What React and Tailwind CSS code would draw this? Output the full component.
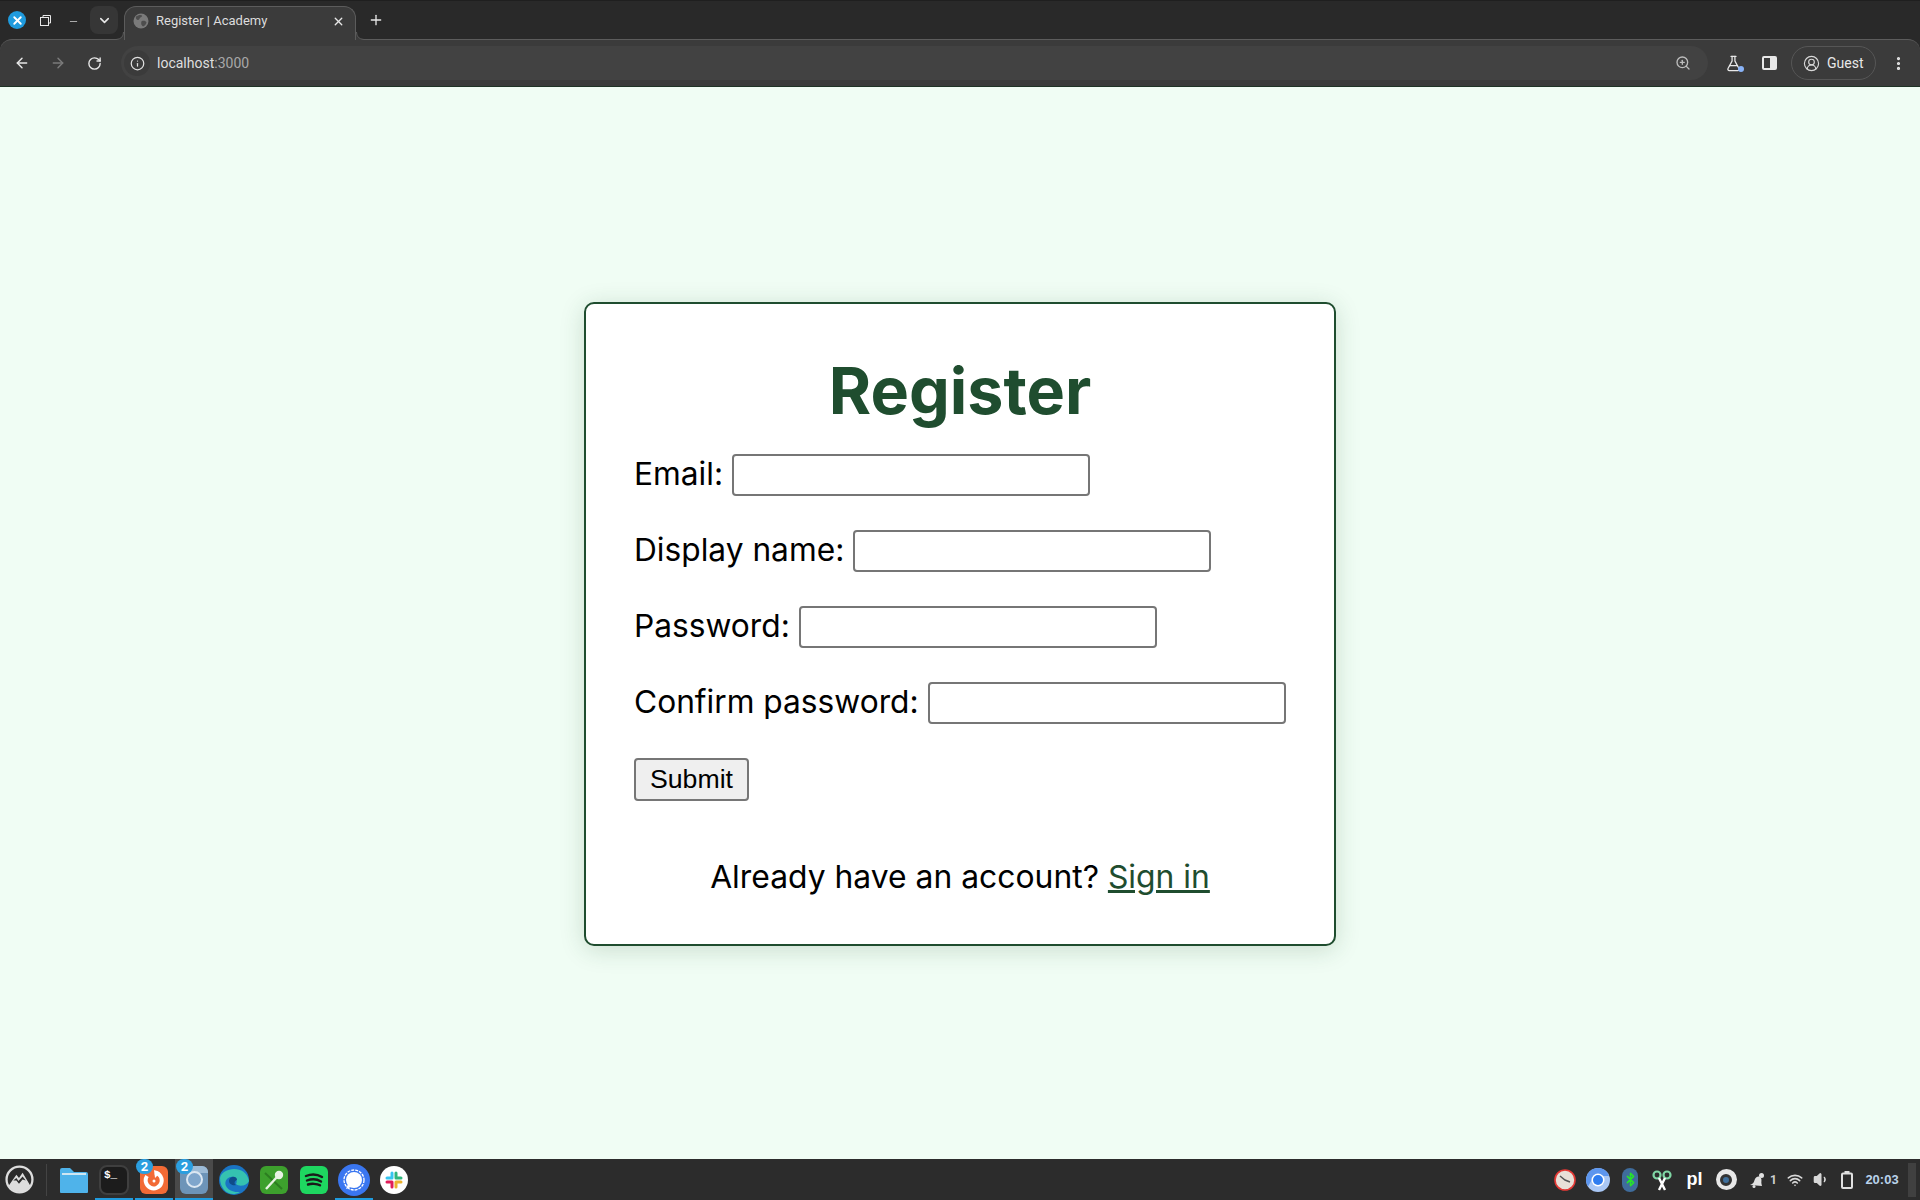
import React from "react";
import {
  ArrowLeft,
  ArrowRight,
  RotateCw,
  Info,
  ZoomIn,
  FlaskConical,
  CircleUserRound,
  EllipsisVertical,
  Plus,
  X,
  ChevronDown,
  Minus,
  Wifi,
  Volume1,
  Bluetooth,
} from "lucide-react";

function TabStrip() {
  return (
    <div className="flex h-[39px] items-start border-t border-[#1f1f1f]">
      <div className="flex h-[38px] w-[34px] items-center justify-center">
        <div className="flex h-[18px] w-[18px] items-center justify-center rounded-full bg-[#1f9bde]">
          <X size={13} strokeWidth={3.5} className="text-white" />
        </div>
      </div>
      <div className="flex h-[38px] w-[22px] items-center justify-center">
        <svg width="11" height="11" viewBox="0 0 11 11" fill="none" stroke="#e8e8e8" strokeWidth="1">
          <rect x="0.5" y="2.5" width="8" height="8" />
          <path d="M3 2.5V0.5H10.5V8H8.5" />
        </svg>
      </div>
      <div className="flex h-[38px] w-[34px] items-end justify-center pb-[12px]">
        <Minus size={11} strokeWidth={1.5} className="text-[#e8e8e8]" />
      </div>
      <div className="mt-[5px] flex h-[28px] w-[28px] items-center justify-center rounded-lg bg-[#363636]">
        <ChevronDown size={15} strokeWidth={2.5} className="text-[#e8e8e8]" />
      </div>
      <div className="relative ml-[6px] mt-[5px] flex h-[34px] w-[232px] items-center rounded-t-xl border border-b-0 border-[#5c5c5c] bg-[#3b3b3b] pb-[5px] pl-[8px] pr-[10px]">
        <svg width="16" height="16" viewBox="0 0 16 16">
          <circle cx="8" cy="8" r="7.5" fill="#7a7a7a" />
          <path d="M3 3.5c2-1.5 5-2 6-1 .5 1-1 1.500-2 2.500-1 .8-.5 2-2 2-1.500 0-2.500-1.500-2-3.500zM9 8c2-.5 4 0 4.500 1.500-.5 2-2 3.500-3.500 4-1-1-2-2-1.800-3.300 0-1 .2-1.900.8-2.200z" fill="#4d4d4d" />
        </svg>
        <span className="ml-[7px] flex-1 font-['Roboto',sans-serif] text-[13px] text-[#dddddd]">Register | Academy</span>
        <X size={13} strokeWidth={2.5} className="text-[#e8e8e8]" />
        <svg className="absolute bottom-0 left-[-9px]" width="8" height="8" viewBox="0 0 8 8">
          <path d="M8 0Q8 7 0 7.500V8H8Z" fill="#3b3b3b" />
          <path d="M7.500 0Q7.500 7 0 7.500" fill="none" stroke="#5c5c5c" />
        </svg>
        <svg className="absolute bottom-0 right-[-9px]" width="8" height="8" viewBox="0 0 8 8">
          <path d="M0 0Q0 7 8 7.500V8H0Z" fill="#3b3b3b" />
          <path d="M0.500 0Q0.500 7 8 7.500" fill="none" stroke="#5c5c5c" />
        </svg>
      </div>
      <div className="ml-[8px] mt-[5px] flex h-[28px] w-[24px] items-center justify-center">
        <Plus size={16} strokeWidth={2} className="text-[#e8e8e8]" />
      </div>
    </div>
  );
}

function Toolbar() {
  return (
    <div className="flex h-[48px] items-center rounded-t-xl border-t border-b border-t-[#5c5c5c] border-b-[#1f3326] bg-[#3b3b3b]">
      <div className="flex w-[116px] shrink-0 items-center">
        <div className="flex w-[40px] justify-center pl-[4px]">
          <ArrowLeft size={16} strokeWidth={2.2} className="text-[#e8e8e8]" />
        </div>
        <div className="flex w-[36px] justify-center">
          <ArrowRight size={16} strokeWidth={2.2} className="text-[#7b7b7b]" />
        </div>
        <div className="flex w-[36px] justify-center">
          <RotateCw size={15} strokeWidth={2.2} className="text-[#e8e8e8]" />
        </div>
      </div>
      <div className="ml-[5px] flex h-[34px] w-[1587px] shrink-0 items-center rounded-full bg-[#424242] pl-[3px] pr-[17px]">
        <div className="flex h-[26px] w-[26px] items-center justify-center rounded-full bg-[#3b3b3b]">
          <Info size={15} strokeWidth={2} className="text-[#e0e0e0]" />
        </div>
        <span className="ml-[7px] flex-1 font-['Roboto',sans-serif] text-[14px] text-[#dfdfdf]">
          localhost<span className="text-[#a8a8a8]">:3000</span>
        </span>
        <ZoomIn size={16} strokeWidth={2} className="text-[#bdbdbd]" />
      </div>
      <div className="ml-[7px] flex w-[36px] justify-center">
        <div className="relative">
          <FlaskConical size={17} strokeWidth={1.8} className="text-[#e8e8e8]" />
          <span className="absolute bottom-0 right-[-2px] h-[6px] w-[6px] rounded-full bg-[#8ab4f8]" />
        </div>
      </div>
      <div className="flex w-[36px] justify-center">
        <div className="flex h-[14px] w-[15px] overflow-hidden rounded-[2px] border-2 border-[#e8e8e8]">
          <div className="w-[6px]" />
          <div className="flex-1 bg-[#e8e8e8]" />
        </div>
      </div>
      <div className="ml-[4px] flex h-[34px] w-[85px] items-center gap-[7px] rounded-full border border-[#565656] pl-[11px]">
        <CircleUserRound size={17} strokeWidth={1.6} className="text-[#d8d8d8]" />
        <span className="font-['Roboto',sans-serif] text-[14px] text-[#e8e8e8]">Guest</span>
      </div>
      <div className="ml-[13px] flex w-[18px] justify-center">
        <EllipsisVertical size={17} strokeWidth={2.5} className="text-[#e8e8e8]" />
      </div>
    </div>
  );
}

function FormRow({ label, last }) {
  return (
    <div className={`h-[42px] whitespace-nowrap leading-[42px] ${last ? "mb-[35px]" : "mb-[34px]"}`}>
      <label className="text-[31.7px] text-black">
        {label}{" "}
        <input
          type="text"
          className="h-[42px] w-[358px] rounded-[4px] border-2 border-[#767676] bg-white px-1 align-[1px] font-['Liberation_Sans',sans-serif] text-[26.67px]"
        />
      </label>
    </div>
  );
}

function RegisterCard() {
  return (
    <div className="w-[752px] rounded-[10px] border-2 border-[#1f4d2f] bg-white p-12 font-['Inter',sans-serif] shadow-[0_4px_24px_rgba(31,77,47,0.18)]">
      <h1 className="mb-[24px] text-center text-[64.6px] font-bold leading-[77px] text-[#1f4d2f]">Register</h1>
      <form>
        <FormRow label="Email:" />
        <FormRow label="Display name:" />
        <FormRow label="Password:" />
        <FormRow label="Confirm password:" last />
        <button
          type="button"
          className="h-[43px] w-[115px] rounded-[4px] border-2 border-[#767676] bg-[#efefef] pb-[2px] font-['Liberation_Sans',sans-serif] text-[26.67px] leading-[36px] text-black"
        >
          Submit
        </button>
      </form>
      <p className="mt-[56px] text-center text-[31.85px] leading-[39px] text-black">
        Already have an account?{" "}
        <a href="#signin" className="text-[#1f4d2f] underline">
          Sign in
        </a>
      </p>
    </div>
  );
}

function Badge({ n }) {
  return (
    <span className="absolute left-[1px] top-0 flex h-[15px] w-[17px] items-center justify-center rounded-full bg-[#2b9fe0] font-['Roboto',sans-serif] text-[13px] font-bold text-white">
      {n}
    </span>
  );
}

function DockSlot({ children, running, active }) {
  return (
    <div className={`relative flex h-full w-[38px] items-center justify-center ${active ? "bg-[#4a4a4a]" : ""}`}>
      {children}
      {running && <span className="absolute bottom-0 left-0 right-0 h-[2px] bg-[#1f9bde]" />}
    </div>
  );
}

function Taskbar() {
  return (
    <div className="flex h-[41px] items-center justify-between bg-[#2c2c2c]">
      <div className="flex h-full items-center">
        <div className="flex w-[46px] items-center justify-center pr-[8px]">
          <svg width="29" height="29" viewBox="0 0 28 28">
            <circle cx="14" cy="14" r="12.500" fill="#2c2c2c" stroke="#dddddd" strokeWidth="2.200" />
            <path d="M3.500 20L11 9.500L13.500 12.500L17 7.500L24.500 20C21 25 18 26 14 26C10 26 6 24 3.500 20Z" fill="#dddddd" />
            <path d="M8 15L11 12.500L13 15.500L17 11L20 15L17 14L13.500 18L11 15Z" fill="#2c2c2c" />
          </svg>
        </div>
        <div className="h-[32px] w-px bg-[#444444]" />
        <div className="ml-[8px] flex h-full items-center gap-[2px]">
          <DockSlot>
            <svg width="30" height="28" viewBox="0 0 30 28">
              <path d="M1 4a2 2 0 0 1 2-2h8l4 4h12a2 2 0 0 1 2 2v18a1 1 0 0 1-1 1H2a1 1 0 0 1-1-1z" fill="#4fb3ea" />
              <rect x="3" y="7" width="24" height="2" fill="#cfe6f2" />
            </svg>
          </DockSlot>
          <DockSlot running>
            <div className="h-[30px] w-[30px] rounded-lg border-2 border-[#3f3f3f] bg-[#1c1c1c] pl-[3px] font-['Liberation_Mono',monospace] text-[11px] font-bold leading-[16px] text-white">
              $_
            </div>
          </DockSlot>
          <DockSlot running>
            <div className="flex h-[28px] w-[28px] items-center justify-center rounded-md bg-[#f26a35]">
              <svg width="22" height="22" viewBox="0 0 22 22" fill="none">
                <path d="M12 3.500A8 8 0 1 1 4 7" stroke="#ffffff" strokeWidth="4" />
                <path d="M11 1l6 3-5 5z" fill="#ffffff" />
                <circle cx="11" cy="12" r="1.500" fill="#ffffff" />
              </svg>
            </div>
            <Badge n="2" />
          </DockSlot>
          <DockSlot running active>
            <div className="relative flex h-[28px] w-[28px] items-center justify-center overflow-hidden rounded-md bg-[#6d94b8]">
              <div className="absolute right-0 top-0 h-[7px] w-[20px] bg-[#9dbbd6]" />
              <div className="relative h-[17px] w-[17px] rounded-full border-2 border-[#dbe7f2] bg-[#7fa6cc]" />
            </div>
            <Badge n="2" />
          </DockSlot>
          <DockSlot>
            <svg width="32" height="32" viewBox="0 0 32 32">
              <circle cx="16" cy="16" r="15" fill="#1a74c4" />
              <path d="M2 14C4 3 28 0 31 17c-2 5-10 6-13 3 3-6-4-10-9-5-5 6 2 14 13 13 -10 6-20-2-20-14z" fill="#35c2b0" />
              <path d="M11 17c0-5 8-6 8-1-3 1-3 4-1 5-3 1-7-1-7-4z" fill="#0f4c8a" />
            </svg>
          </DockSlot>
          <DockSlot>
            <div className="flex h-[28px] w-[28px] items-center justify-center rounded-md bg-[#3da02d]">
              <svg width="24" height="24" viewBox="0 0 24 24" fill="none" stroke="#e8f3e3" strokeWidth="2.400">
                <path d="M3 5l17 16" stroke="#2c7d20" strokeWidth="2" />
                <circle cx="17" cy="7" r="3" fill="#e8f3e3" />
                <path d="M15 9L4 21" />
              </svg>
            </div>
          </DockSlot>
          <DockSlot>
            <div className="flex h-[28px] w-[28px] items-center justify-center rounded-md bg-[#1ed760]">
              <svg width="20" height="16" viewBox="0 0 20 16" fill="none" stroke="#1a1a1a" strokeWidth="2.400" strokeLinecap="round">
                <path d="M2 4c5-2 11-2 16 1" />
                <path d="M3 8.500c4-1.500 10-1.500 14 1" />
                <path d="M4 12.500c3-1 9-1 12 .8" />
              </svg>
            </div>
          </DockSlot>
          <DockSlot running>
            <div className="flex h-[32px] w-[32px] items-center justify-center rounded-full bg-[#3a76f0]">
              <svg width="26" height="26" viewBox="0 0 26 26">
                <circle cx="13" cy="13" r="10" fill="none" stroke="#ffffff" strokeWidth="1.300" strokeDasharray="3 1" />
                <circle cx="13" cy="13" r="8" fill="#ffffff" />
                <path d="M7 17l-2 5 5-2z" fill="#ffffff" />
              </svg>
            </div>
          </DockSlot>
          <DockSlot>
            <div className="flex h-[28px] w-[28px] items-center justify-center rounded-full bg-white">
              <svg width="18" height="18" viewBox="0 0 18 18" strokeWidth="3" strokeLinecap="round" fill="none">
                <path d="M7 2v5M2 7h5" stroke="#36c5f0" />
                <path d="M16 7h-5M11 2v5" stroke="#2eb67d" />
                <path d="M11 16v-5M16 11h-5" stroke="#ecb22e" />
                <path d="M2 11h5M7 16v-5" stroke="#e01e5a" />
              </svg>
            </div>
          </DockSlot>
        </div>
      </div>

      <div className="flex h-full items-center">
        <div className="flex w-[34px] justify-center">
          <svg width="22" height="22" viewBox="0 0 22 22">
            <circle cx="11" cy="11" r="10" fill="#e8e0d8" stroke="#e53935" strokeWidth="1.600" />
            <path d="M6 7l5 4 5 2" fill="none" stroke="#555555" strokeWidth="1.500" />
          </svg>
        </div>
        <div className="flex w-[32px] justify-center">
          <svg width="24" height="24" viewBox="0 0 24 24">
            <circle cx="12" cy="12" r="12" fill="#a9c7f5" />
            <path d="M12 0a12 12 0 0 0-10 18.500L8 8h15A12 12 0 0 0 12 0Z" fill="#5d96ee" />
            <circle cx="12" cy="12" r="6.500" fill="#ffffff" />
            <circle cx="12" cy="12" r="5" fill="#2f7df0" />
          </svg>
        </div>
        <div className="flex w-[32px] justify-center">
          <div className="flex h-[24px] w-[16px] items-center justify-center rounded-full bg-[#3f6c9c]">
            <Bluetooth size={15} strokeWidth={2.500} className="text-[#27e32b]" />
          </div>
        </div>
        <div className="flex w-[32px] justify-center">
          <svg width="20" height="22" viewBox="0 0 20 22" fill="none">
            <circle cx="5" cy="6" r="3.500" stroke="#7fd6a4" strokeWidth="2.200" />
            <circle cx="15" cy="6" r="3.500" stroke="#7fd6a4" strokeWidth="2.200" />
            <path d="M7 9L13 21L10 15L7 21L13 9" stroke="#ffffff" strokeWidth="2.400" />
          </svg>
        </div>
        <div className="flex w-[33px] justify-center font-['Liberation_Sans',sans-serif] text-[18px] font-bold text-white">pl</div>
        <div className="flex w-[30px] justify-center">
          <div className="flex h-[21px] w-[21px] items-center justify-center rounded-full bg-[#e8e8e8]">
            <div className="h-[12px] w-[12px] rounded-full border-[3px] border-[#333333] bg-[#3f6f9c]" />
          </div>
        </div>
        <div className="flex w-[41px] items-center gap-[5px] pl-[8px]">
          <svg width="16" height="16" viewBox="0 0 16 16" fill="#e0e0e0">
            <path d="M1 13l2-1c2-1 2-3 3-5 1-2 3-3 5-2l1 1c1 2 0 4 .5 6l.5 2Z" />
            <circle cx="12.500" cy="3.500" r="2.500" />
            <circle cx="5" cy="14.500" r="1.500" />
          </svg>
          <span className="font-['Roboto',sans-serif] text-[12px] font-bold text-[#d0d0d0]">1</span>
        </div>
        <div className="flex w-[26px] justify-center">
          <Wifi size={16} strokeWidth={2.400} className="text-[#d8d8d8]" />
        </div>
        <div className="flex w-[26px] justify-center">
          <Volume1 size={17} fill="#d8d8d8" className="text-[#d8d8d8]" />
        </div>
        <div className="flex w-[26px] justify-center">
          <svg width="12" height="18" viewBox="0 0 12 18" fill="none">
            <rect x="3.500" y="0" width="5" height="2.500" fill="#e0e0e0" />
            <rect x="1" y="2.500" width="10" height="14.500" rx="1" stroke="#e0e0e0" strokeWidth="2" />
          </svg>
        </div>
        <div className="w-[44px] text-center font-['Liberation_Sans',sans-serif] text-[13px] font-bold text-[#b9d2ea]">20:03</div>
        <div className="ml-[4px] mr-[4px] h-[34px] w-[8px] bg-[#404040]" />
      </div>
    </div>
  );
}

export default function App() {
  return (
    <div className="flex h-[1200px] flex-col overflow-hidden bg-[#f0fdf4]">
      <div className="bg-[#292929]">
        <TabStrip />
        <Toolbar />
      </div>
      <main className="flex flex-1 items-center justify-center pt-[2px]">
        <RegisterCard />
      </main>
      <Taskbar />
    </div>
  );
}
